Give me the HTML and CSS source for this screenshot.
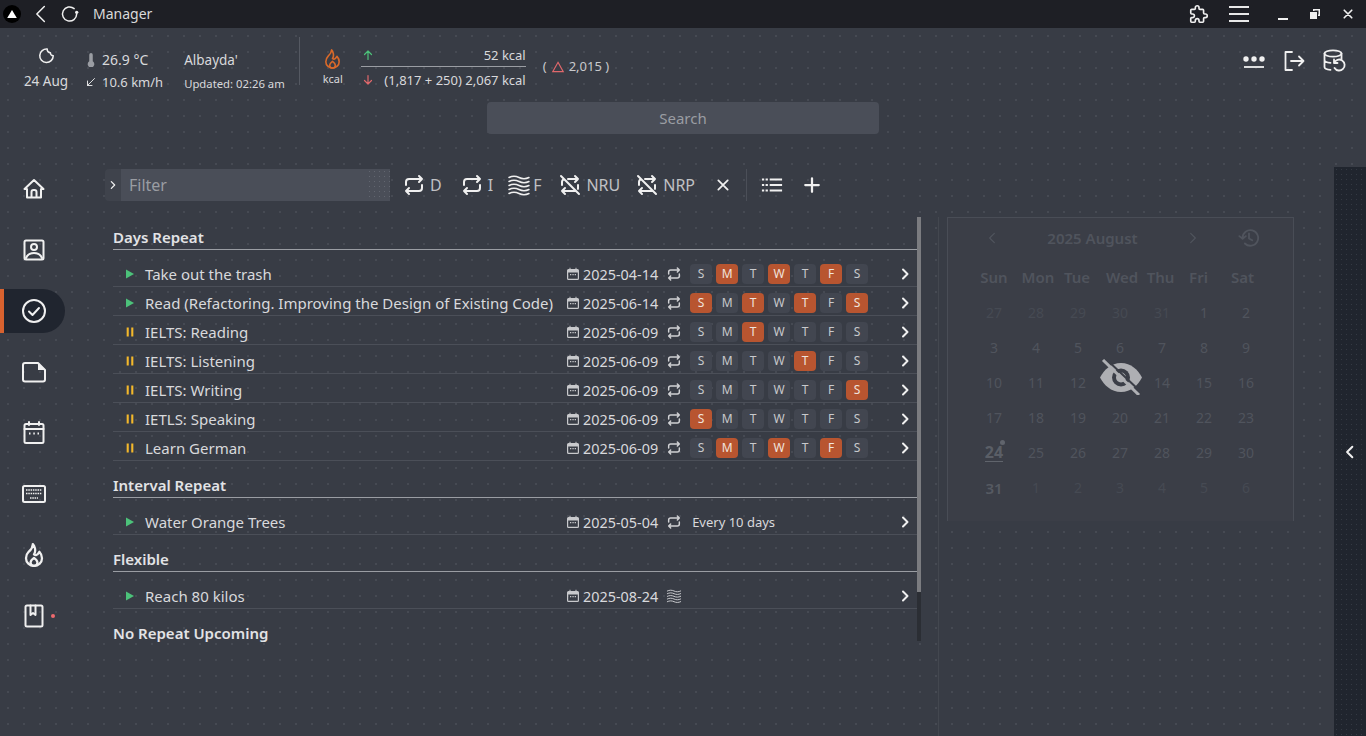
FILE: index.html
```html
<!DOCTYPE html>
<html lang="en">
<head>
    <meta charset="UTF-8">
    <meta name="viewport" content="width=device-width, initial-scale=1.0">
    <title>Manager</title>
    <link rel="stylesheet" href="styles.css">
</head>
<body>

    <!-- shared icons -->
    <svg class="sprite" width="0" height="0">
        <symbol id="i-repeat" viewBox="0 0 24 24"><path d="M4 12V9a3 3 0 0 1 3-3h13m-3-3 3 3-3 3M20 12v3a3 3 0 0 1-3 3H4m3 3-3-3 3-3"/></symbol>
        <symbol id="i-repeat-off" viewBox="0 0 24 24"><path d="M4 12V9c0-1.3.9-2.500 2.100-2.900M10 6h10m-3-3 3 3-3 3M20 12v3c0 .3 0 .6-.1.9m-2 2c-.3.1-.6.1-.9.1H4m3 3-3-3 3-3M3 3l18 18"/></symbol>
        <symbol id="i-waves" viewBox="0 0 24 24"><path d="M2 4.500c3.300-1.600 6.700-1.600 10 0s6.700 1.600 10 0M2 8.500c3.300-1.600 6.700-1.600 10 0s6.700 1.600 10 0M2 12.500c3.300-1.600 6.700-1.600 10 0s6.700 1.600 10 0M2 16.500c3.300-1.600 6.700-1.600 10 0s6.700 1.600 10 0M2 20.500c3.300-1.600 6.700-1.600 10 0s6.700 1.600 10 0"/></symbol>
        <symbol id="i-date" viewBox="0 0 14 14"><path d="M2.500 2h1V.8h1V2h5V.8h1V2h1A1.500 1.500 0 0 1 13 3.500v8a1.500 1.500 0 0 1-1.500 1.500h-9A1.500 1.500 0 0 1 1 11.500v-8A1.500 1.500 0 0 1 2.500 2zM2.200 5.500v6c0 .2.100.3.300.3h9c.2 0 .3-.1.300-.3v-6zM4 7h1.300v1.300H4zm2.400 0h1.300v1.300H6.400zm2.300 0H10v1.300H8.700z"/></symbol>
        <symbol id="i-next" viewBox="0 0 24 24"><path d="M8 3l9 9-9 9"/></symbol>
        <symbol id="i-play" viewBox="0 0 10 10"><path d="M1 .5l8 4.500-8 4.500z"/></symbol>
        <symbol id="i-pause" viewBox="0 0 10 12"><path d="M1 .5h2.500v11H1zm5.500 0H9v11H6.500z"/></symbol>
    </svg>

    <div class="titlebar">
        <div class="title-left">
            <span class="logo"><svg viewBox="0 0 12 10"><path d="M6 0l6 10H0z"/></svg></span>
            <svg class="icon back" viewBox="0 0 24 24"><path d="M16 3l-9 9 9 9"/></svg>
            <svg class="icon reload" viewBox="0 0 24 24"><path d="M20 12a8.500 8.500 0 1 1-3-6.500"/><circle class="solid" cx="20" cy="10" r="2"/></svg>
            <span class="app-name">Manager</span>
        </div>
        <div class="title-right">
            <svg class="icon puzzle" viewBox="0 0 24 24"><path d="M4 7h3a1 1 0 0 0 1-1V5a2 2 0 0 1 4 0v1a1 1 0 0 0 1 1h3a1 1 0 0 1 1 1v3a1 1 0 0 0 1 1h1a2 2 0 0 1 0 4h-1a1 1 0 0 0-1 1v3a1 1 0 0 1-1 1h-3a1 1 0 0 1-1-1v-1a2 2 0 0 0-4 0v1a1 1 0 0 1-1 1H4a1 1 0 0 1-1-1v-3a1 1 0 0 1 1-1h1a2 2 0 0 0 0-4H4a1 1 0 0 1-1-1V8a1 1 0 0 1 1-1"/></svg>
            <span class="burger"><i></i><i></i><i></i></span>
            <span class="win-min"></span>
            <svg class="win-restore" viewBox="0 0 10 10"><path class="solid" d="M3 0h7v7H8V5.500h.5v-4h-4V2H3zM0 3h7v7H0z"/></svg>
            <svg class="icon win-close" viewBox="0 0 24 24"><path d="M3 3l18 18M21 3L3 21"/></svg>
        </div>
    </div>

    <div class="header">
        <div class="weather-date">
            <svg class="icon moon" viewBox="0 0 24 24"><path d="M13 3a9.500 9.500 0 1 0 8.500 9.500 5 5 0 0 1-3-1.500 4 4 0 0 1-1-3 4.500 4.500 0 0 1-4.500-5z"/></svg>
            <span>24 Aug</span>
        </div>
        <div class="weather-stats">
            <div class="stat">
                <svg class="stat-icon" viewBox="0 0 10 16"><path class="dim" d="M3 2a2 2 0 0 1 4 0v7.500a3.800 3.800 0 1 1-4 0z"/></svg>
                <span>26.9 °C</span>
            </div>
            <div class="stat stat-wind">
                <svg class="icon stat-icon" viewBox="0 0 24 24"><path d="M19 5L5 19M5 10v9h9"/></svg>
                <span>10.6 km/h</span>
            </div>
        </div>
        <div class="place">
            <span class="place-name">Albayda'</span>
            <span class="updated">Updated: 02:26 am</span>
        </div>
        <div class="header-sep"></div>
        <div class="kcal-icon">
            <svg class="icon flame" viewBox="4 1 16 21"><path d="M12 10.900c2.300-3.300.2-7.800-1-8.900 0 3.400-2.200 5.300-3.700 6.700C5.900 10.100 5 12.300 5 14.300 5 18 8.100 21 12 21s7-3 7-6.700c0-1.700-1.200-4.400-2.300-5.600-2.100 3.400-3.300 3.400-4.700 2.200z"/><path d="M12 21a3 3 0 0 0 3-3c0-1.800-3-4-3-4s-3 2.200-3 4a3 3 0 0 0 3 3z"/></svg>
            <span>kcal</span>
        </div>
        <div class="kcal-table">
            <div class="kcal-row kcal-in">
                <svg class="kcal-arrow up" viewBox="0 0 24 24"><path d="M12 21V4M5 11l7-7 7 7"/></svg>
                <span>52 kcal</span>
            </div>
            <div class="kcal-row">
                <svg class="kcal-arrow down" viewBox="0 0 24 24"><path d="M12 3v17M5 13l7 7 7-7"/></svg>
                <span>(1,817 + 250) 2,067 kcal</span>
            </div>
        </div>
        <div class="kcal-delta">
            <span>(</span>
            <svg class="delta-icon" viewBox="0 0 24 24"><path d="M12 4l9 16H3z"/></svg>
            <span>2,015 )</span>
        </div>
        <div class="header-actions">
            <svg class="icon action" viewBox="0 0 24 24"><path class="square" d="M2 19h20"/><g class="solid"><circle cx="4" cy="11" r="2.700"/><circle cx="12" cy="11" r="2.700"/><circle cx="20" cy="11" r="2.700"/></g></svg>
            <svg class="icon action" viewBox="0 0 24 24"><path d="M10 4H3.500v18H10M9 13h12.500M17 8.500l4.500 4.500-4.500 4.500"/></svg>
            <svg class="icon action" viewBox="0 0 24 24"><ellipse cx="11" cy="5.500" rx="8.500" ry="3.200"/><path d="M2.500 5.500v13.500c0 1.500 2.500 2.600 6 2.900M19.500 5.500V11M2.500 12c0 1.500 2.500 2.600 6 2.900"/><path d="M12 11.500v3.500h3.500M12 15a5.500 5.500 0 1 1 .5 5"/></svg>
        </div>
    </div>

    <div class="search">Search</div>

    <div class="workspace">
        <nav class="sidebar">
            <a class="nav-item"><svg class="icon" viewBox="0 0 24 24"><path d="M5 12H2.500L12 3l9.500 9H19M5 12v8.500h14V12M9.500 20.500V15a2 2 0 0 1 2-2h1a2 2 0 0 1 2 2v5.500"/></svg></a>
            <a class="nav-item"><svg class="icon" viewBox="0 0 24 24"><rect x="2.500" y="2.500" width="19" height="19" rx="1.500"/><circle cx="12" cy="9" r="3"/><path d="M4 20c1.500-3.500 4.500-5 8-5s6.500 1.500 8 5"/></svg></a>
            <a class="nav-item active"><svg class="icon" viewBox="0 0 24 24"><circle cx="12" cy="12" r="11"/><path d="M7 12.500l3.500 3.500L17 9"/></svg></a>
            <a class="nav-item"><svg class="icon" viewBox="0 0 24 24"><path d="M1 5a2 2 0 0 1 2-2h13l7 7v9.500a2 2 0 0 1-2 2H3a2 2 0 0 1-2-2z"/><path class="solid" d="M16 3l7 7h-7z"/></svg></a>
            <a class="nav-item"><svg class="icon" viewBox="0 0 24 24"><rect x="2.500" y="3" width="19" height="19" rx="1.500"/><path d="M2.500 8h19M7 1v3M17 1v3"/><path class="dots" d="M7 12.500h1.500M11.300 12.500h1.500M15.500 12.500H17"/></svg></a>
            <a class="nav-item"><svg class="icon keys" viewBox="0 0 24 24"><rect x="1" y="4" width="22" height="16" rx="1.500"/><path class="dots" d="M4 8h16M4 11.500h16M8 16h8"/></svg></a>
            <a class="nav-item"><svg class="icon" viewBox="4 1 16 21"><path d="M12 10.900c2.300-3.300.2-7.800-1-8.900 0 3.400-2.200 5.300-3.700 6.700C5.900 10.100 5 12.300 5 14.300 5 18 8.100 21 12 21s7-3 7-6.700c0-1.700-1.200-4.400-2.300-5.600-2.100 3.400-3.300 3.400-4.700 2.200z"/><path d="M12 21a3 3 0 0 0 3-3c0-1.800-3-4-3-4s-3 2.200-3 4a3 3 0 0 0 3 3z"/></svg></a>
            <a class="nav-item"><svg class="icon" viewBox="0 0 24 24"><rect x="3.500" y="1.500" width="17" height="21" rx="1.500"/><path d="M8.500 1.500V11l2.500-2 2.500 2V1.500"/></svg><span class="nav-dot"></span></a>
        </nav>

        <main class="content">
            <div class="toolbar">
                <div class="filter">
                    <span class="filter-toggle"><svg class="icon" viewBox="0 0 24 24"><path d="M8 4l8 8-8 8"/></svg></span>
                    <div class="filter-input"><span>Filter</span><span class="filter-dots"></span></div>
                </div>
                <a class="tool"><svg class="icon"><use href="#i-repeat"/></svg><span>D</span></a>
                <a class="tool"><svg class="icon"><use href="#i-repeat"/></svg><span>I</span></a>
                <a class="tool tool-waves"><svg class="icon thin"><use href="#i-waves"/></svg><span>F</span></a>
                <a class="tool tool-off"><svg class="icon"><use href="#i-repeat-off"/></svg><span>NRU</span></a>
                <a class="tool tool-nrp"><svg class="icon"><use href="#i-repeat-off"/></svg><span>NRP</span></a>
                <a class="tool tool-x"><svg class="icon heavy" viewBox="0 0 24 24"><path d="M4 4l16 16M20 4L4 20"/></svg></a>
                <span class="tool-sep"></span>
                <a class="tool tool-list"><svg class="icon" viewBox="0 0 24 24"><path class="dots" d="M1 6h2.500M5 6h2.500M1 12h2.500M5 12h2.500M1 18h2.500M5 18h2.500M9.500 6H23M9.500 12H23M9.500 18H23"/></svg></a>
                <a class="tool tool-add"><svg class="icon heavy" viewBox="0 0 24 24"><path d="M12 3v18M3 12h18"/></svg></a>
            </div>

            <div class="panes">
                <section class="tasks">
                    <div class="task-list">
                        <h4 class="group">Days Repeat</h4>

                        <div class="task">
                            <svg class="status play"><use href="#i-play"/></svg>
                            <span class="task-name">Take out the trash</span>
                            <svg class="date-icon"><use href="#i-date"/></svg><span class="date">2025-04-14</span>
                            <svg class="icon kind"><use href="#i-repeat"/></svg>
                            <div class="days"><span>S</span><span class="on">M</span><span>T</span><span class="on">W</span><span>T</span><span class="on">F</span><span>S</span></div>
                            <svg class="icon next"><use href="#i-next"/></svg>
                        </div>
                        <div class="task">
                            <svg class="status play"><use href="#i-play"/></svg>
                            <span class="task-name">Read (Refactoring. Improving the Design of Existing Code)</span>
                            <svg class="date-icon"><use href="#i-date"/></svg><span class="date">2025-06-14</span>
                            <svg class="icon kind"><use href="#i-repeat"/></svg>
                            <div class="days"><span class="on">S</span><span>M</span><span class="on">T</span><span>W</span><span class="on">T</span><span>F</span><span class="on">S</span></div>
                            <svg class="icon next"><use href="#i-next"/></svg>
                        </div>
                        <div class="task">
                            <svg class="status pause"><use href="#i-pause"/></svg>
                            <span class="task-name">IELTS: Reading</span>
                            <svg class="date-icon"><use href="#i-date"/></svg><span class="date">2025-06-09</span>
                            <svg class="icon kind"><use href="#i-repeat"/></svg>
                            <div class="days"><span>S</span><span>M</span><span class="on">T</span><span>W</span><span>T</span><span>F</span><span>S</span></div>
                            <svg class="icon next"><use href="#i-next"/></svg>
                        </div>
                        <div class="task">
                            <svg class="status pause"><use href="#i-pause"/></svg>
                            <span class="task-name">IELTS: Listening</span>
                            <svg class="date-icon"><use href="#i-date"/></svg><span class="date">2025-06-09</span>
                            <svg class="icon kind"><use href="#i-repeat"/></svg>
                            <div class="days"><span>S</span><span>M</span><span>T</span><span>W</span><span class="on">T</span><span>F</span><span>S</span></div>
                            <svg class="icon next"><use href="#i-next"/></svg>
                        </div>
                        <div class="task">
                            <svg class="status pause"><use href="#i-pause"/></svg>
                            <span class="task-name">IELTS: Writing</span>
                            <svg class="date-icon"><use href="#i-date"/></svg><span class="date">2025-06-09</span>
                            <svg class="icon kind"><use href="#i-repeat"/></svg>
                            <div class="days"><span>S</span><span>M</span><span>T</span><span>W</span><span>T</span><span>F</span><span class="on">S</span></div>
                            <svg class="icon next"><use href="#i-next"/></svg>
                        </div>
                        <div class="task">
                            <svg class="status pause"><use href="#i-pause"/></svg>
                            <span class="task-name">IETLS: Speaking</span>
                            <svg class="date-icon"><use href="#i-date"/></svg><span class="date">2025-06-09</span>
                            <svg class="icon kind"><use href="#i-repeat"/></svg>
                            <div class="days"><span class="on">S</span><span>M</span><span>T</span><span>W</span><span>T</span><span>F</span><span>S</span></div>
                            <svg class="icon next"><use href="#i-next"/></svg>
                        </div>
                        <div class="task">
                            <svg class="status pause"><use href="#i-pause"/></svg>
                            <span class="task-name">Learn German</span>
                            <svg class="date-icon"><use href="#i-date"/></svg><span class="date">2025-06-09</span>
                            <svg class="icon kind"><use href="#i-repeat"/></svg>
                            <div class="days"><span>S</span><span class="on">M</span><span>T</span><span class="on">W</span><span>T</span><span class="on">F</span><span>S</span></div>
                            <svg class="icon next"><use href="#i-next"/></svg>
                        </div>

                        <h4 class="group">Interval Repeat</h4>
                        <div class="task">
                            <svg class="status play"><use href="#i-play"/></svg>
                            <span class="task-name">Water Orange Trees</span>
                            <svg class="date-icon"><use href="#i-date"/></svg><span class="date">2025-05-04</span>
                            <svg class="icon kind"><use href="#i-repeat"/></svg>
                            <span class="every">Every 10 days</span>
                            <svg class="icon next"><use href="#i-next"/></svg>
                        </div>

                        <h4 class="group">Flexible</h4>
                        <div class="task">
                            <svg class="status play"><use href="#i-play"/></svg>
                            <span class="task-name">Reach 80 kilos</span>
                            <svg class="date-icon"><use href="#i-date"/></svg><span class="date">2025-08-24</span>
                            <svg class="icon kind thin"><use href="#i-waves"/></svg>
                            <svg class="icon next"><use href="#i-next"/></svg>
                        </div>

                        <h4 class="group last">No Repeat Upcoming</h4>
                    </div>
                    <div class="scrollbar"><div class="scroll-thumb"></div></div>
                </section>

                <aside class="side">
                    <div class="calendar">
                        <div class="cal-head">
                            <svg class="icon cal-prev" viewBox="0 0 24 24"><path d="M16 4l-8 8 8 8"/></svg>
                            <span class="cal-title">2025 August</span>
                            <svg class="icon cal-next" viewBox="0 0 24 24"><path d="M8 4l8 8-8 8"/></svg>
                            <svg class="icon cal-history" viewBox="0 0 24 24"><path d="M5 12a8.500 8.500 0 1 1 2.500 6M1.500 10L5 13l3.500-3M12 7v5.500l3.500 2"/></svg>
                        </div>
                        <div class="cal-week">
                            <b>Sun</b><b>Mon</b><b>Tue</b><b>Wed</b><b>Thu</b><b>Fri</b><b>Sat</b>
                        </div>
                        <div class="cal-grid">
                            <span class="out">27</span><span class="out">28</span><span class="out">29</span><span class="out">30</span><span class="out">31</span><span>1</span><span>2</span>
                            <span>3</span><span>4</span><span>5</span><span>6</span><span>7</span><span>8</span><span>9</span>
                            <span>10</span><span>11</span><span>12</span><span>13</span><span>14</span><span>15</span><span>16</span>
                            <span>17</span><span>18</span><span>19</span><span>20</span><span>21</span><span>22</span><span>23</span>
                            <span class="today">24</span><span>25</span><span>26</span><span>27</span><span>28</span><span>29</span><span>30</span>
                            <span class="last-day">31</span><span class="out">1</span><span class="out">2</span><span class="out">3</span><span class="out">4</span><span class="out">5</span><span class="out">6</span>
                        </div>
                        <svg class="eye-off" viewBox="0 0 42 36"><path d="M21 4c10 0 17 7 21 14.500-4 7.500-11 14.500-21 14.500S4 26 0 18.500C4 11 11 4 21 4z"/><circle class="eye-hole" cx="21" cy="18.500" r="9"/><circle cx="21" cy="18.500" r="5"/><path class="eye-slash-gap" d="M6 0l36 34"/><path class="eye-slash" d="M3 1l36 35"/></svg>
                    </div>
                </aside>
            </div>
        </main>

        <div class="drawer">
            <svg class="icon" viewBox="0 0 24 24"><path d="M16 3l-9 9 9 9"/></svg>
        </div>
    </div>

</body>
</html>
```

FILE: styles.css
```css
* {
    box-sizing: border-box;
}

body {
    margin: 0;
    width: 1366px;
    height: 736px;
    overflow: hidden;
    font-family: "Noto Sans", sans-serif;
    font-size: 14px;
    color: #d8d9dc;
    display: flex;
    flex-direction: column;
    /* dotted background starts under the title bar */
    background-color: #383c45;
    background-image: radial-gradient(circle at 8px 8px, #464a53 1px, transparent 1.2px);
    background-size: 16px 16px;
    background-position: 0 28px;
}

.sprite {
    position: absolute;
}

.icon {
    display: block;
    fill: none;
    stroke: #f0f0f0;
    stroke-width: 1.8;
    stroke-linecap: round;
    stroke-linejoin: round;
}

.solid {
    fill: #f0f0f0;
    stroke: none;
}

.thin {
    stroke-width: 1.4;
}

.heavy {
    stroke-width: 3;
}

.square {
    stroke-linecap: butt;
}

/* Title bar */
.titlebar {
    height: 28px;
    flex: none;
    background: #1e1f25;
    display: flex;
    justify-content: space-between;
    align-items: center;
}

.title-left,
.title-right {
    display: flex;
    align-items: center;
}

.logo {
    width: 18px;
    height: 18px;
    margin-left: 3px;
    border-radius: 50%;
    background: #000;
    display: flex;
    justify-content: center;
    align-items: center;
}

.logo svg {
    width: 10px;
    height: 8px;
    fill: #fff;
}

.back {
    width: 20px;
    height: 20px;
    margin-left: 10px;
}

.reload {
    width: 20px;
    height: 20px;
    margin-left: 9px;
}

.app-name {
    margin-left: 13px;
    margin-bottom: 2px;
    font-size: 14px;
    color: #d9d9d9;
}

.puzzle {
    width: 22px;
    height: 22px;
}

.burger {
    width: 20px;
    margin-left: 19px;
    display: flex;
    flex-direction: column;
    gap: 5px;
}

.burger i {
    height: 2px;
    background: #e8e8e8;
}

.win-min {
    width: 10px;
    height: 2px;
    margin-left: 29px;
    margin-top: 9px;
    background: #f0f0f0;
}

.win-restore {
    width: 10px;
    height: 10px;
    margin-left: 22px;
}

.win-close {
    width: 10px;
    height: 10px;
    margin-left: 23px;
    margin-right: 13px;
    stroke-width: 4;
}

/* Header */
.header {
    height: 74px;
    flex: none;
    display: flex;
    align-items: flex-start;
}

.weather-date {
    width: 44px;
    margin-left: 24px;
    margin-top: 19px;
    display: flex;
    flex-direction: column;
    align-items: center;
    white-space: nowrap;
    font-size: 13.5px;
    line-height: 19px;
}

.moon {
    width: 17px;
    height: 17px;
    margin-bottom: 8px;
    stroke-width: 2.2;
}

.weather-stats {
    margin-left: 17px;
    margin-top: 22px;
    display: flex;
    flex-direction: column;
    gap: 3px;
}

.stat {
    display: flex;
    align-items: center;
    height: 19px;
    white-space: nowrap;
    gap: 5px;
}

.stat-wind {
    font-size: 13px;
}

.stat-icon {
    width: 12px;
    height: 12px;
}

.stat:first-child .stat-icon {
    height: 14px;
}

.dim {
    fill: #9a9da3;
}

.place {
    margin-left: 21px;
    margin-top: 23px;
    display: flex;
    flex-direction: column;
    white-space: nowrap;
}

.place-name {
    line-height: 19px;
    font-size: 13.5px;
}

.updated {
    margin-top: 6px;
    font-size: 11.3px;
    line-height: 16px;
}

.header-sep {
    width: 1px;
    height: 48px;
    margin-top: 9px;
    margin-left: 14px;
    background: #555962;
}

.kcal-icon {
    width: 26px;
    margin-left: 20px;
    margin-top: 21px;
    display: flex;
    flex-direction: column;
    align-items: center;
    font-size: 11px;
    line-height: 14px;
}

.flame {
    width: 17px;
    height: 20px;
    margin-bottom: 3px;
    stroke: #d8692a;
    stroke-width: 1.7;
}

.kcal-table {
    width: 165px;
    margin-left: 15px;
    margin-top: 15px;
}

.kcal-row {
    height: 25px;
    display: flex;
    justify-content: space-between;
    align-items: center;
    font-size: 13px;
    padding-left: 1px;
}

.kcal-in {
    height: 24px;
    border-bottom: 1px solid #9a9da3;
    margin-bottom: 0;
}

.kcal-arrow {
    width: 12px;
    height: 12px;
    fill: none;
    stroke-width: 2.4;
    stroke-linecap: round;
    stroke-linejoin: round;
}

.up {
    stroke: #4cc27a;
}

.down {
    stroke: #e0686c;
}

.kcal-delta {
    margin-left: 17px;
    margin-top: 29px;
    display: flex;
    align-items: center;
    gap: 4px;
    font-size: 13px;
    line-height: 19px;
    color: #c8c9cc;
}

.delta-icon {
    width: 14px;
    height: 14px;
    fill: none;
    stroke: #e0686c;
    stroke-width: 2;
}

.header-actions {
    margin-left: auto;
    margin-right: 20px;
    margin-top: 20px;
    display: flex;
    gap: 16px;
}

.action {
    width: 24px;
    height: 24px;
}

/* Search box */
.search {
    width: 392px;
    height: 32px;
    flex: none;
    margin-left: 487px;
    margin-bottom: 33px;
    border-radius: 4px;
    background: #4a4e58;
    color: #9a9da3;
    font-size: 15px;
    line-height: 32px;
    text-align: center;
}

/* Body of the page */
.workspace {
    height: 569px;
    flex: none;
    display: flex;
}

.sidebar {
    width: 105px;
    flex: none;
    display: flex;
    flex-direction: column;
    gap: 17px;
}

.nav-item {
    width: 65px;
    height: 44px;
    padding-left: 22px;
    display: flex;
    align-items: center;
    position: relative;
}

.nav-item .icon {
    width: 24px;
    height: 24px;
    stroke-width: 2;
}

.nav-item.active {
    background: #20252f;
    border-left: 4px solid #d8622f;
    padding-left: 18px;
    border-radius: 0 22px 22px 0;
}

.nav-dot {
    position: absolute;
    left: 51px;
    top: 20px;
    width: 4px;
    height: 4px;
    border-radius: 50%;
    background: #ef6a6e;
}

.dots {
    stroke-linecap: butt;
}

.keys .dots {
    stroke-width: 1.6;
    stroke-dasharray: 1.5 .8;
}

.content {
    flex: 1;
    min-width: 0;
}

/* Toolbar */
.toolbar {
    height: 32px;
    margin-top: 2px;
    display: flex;
    align-items: center;
    gap: 16px;
}

.filter {
    width: 285px;
    height: 32px;
    margin-right: -6px;
    flex: none;
    display: flex;
}

.filter-toggle {
    width: 16px;
    display: flex;
    justify-content: center;
    align-items: center;
    background: #3f434c;
    border-radius: 4px 0 0 4px;
}

.filter-toggle .icon {
    width: 10px;
    height: 10px;
    stroke-width: 3;
}

.filter-input {
    flex: 1;
    padding-left: 8px;
    display: flex;
    justify-content: space-between;
    align-items: center;
    background: #4a4e58;
    color: #9a9da3;
    font-size: 16px;
}

.filter-dots {
    width: 23px;
    height: 32px;
    background-image: radial-gradient(circle at 2.5px 2.5px, #626670 .7px, transparent .9px);
    background-size: 5px 5px;
}

.tool {
    display: flex;
    align-items: center;
    gap: 4px;
    color: #c0c1c4;
    font-size: 16px;
}

.tool .icon {
    width: 24px;
    height: 24px;
    margin-left: 2px;
    stroke-width: 2;
}

.tool .thin {
    stroke-width: 1.5;
}

.tool-waves {
    margin-left: -6px;
}

.tool-waves .icon {
    margin: 0 -2px 0 4px;
}

.tool-off {
    margin-left: -1px;
}

.tool-nrp {
    margin-left: -3px;
}

.tool-x {
    margin-left: 5px;
}

.tool .heavy {
    stroke-width: 3;
    margin-left: 0;
}

.tool-x .icon {
    width: 14px;
    height: 14px;
}

.tool-sep {
    width: 1px;
    height: 32px;
    background: #4b4f58;
}

.tool-list .icon {
    width: 22px;
    height: 22px;
    margin-left: 0;
}

.tool-list {
    margin-left: -2px;
}

.tool-add .icon {
    width: 18px;
    height: 18px;
}

.tool-add {
    margin-left: 4px;
}

/* Task list and calendar */
.panes {
    height: 519px;
    margin-top: 16px;
    display: flex;
}

.tasks {
    width: 833px;
    height: 424px;
    padding-left: 8px;
    flex: none;
    display: flex;
}

.task-list {
    width: 804px;
    flex: none;
}

.group {
    height: 24px;
    margin: 13px 0 8px;
    border-bottom: 1px solid #9a9da3;
    font-size: 15px;
    font-weight: 600;
    line-height: 22px;
    color: #e2e3e5;
}

.group:first-child {
    margin-top: 9px;
}

.group.last {
    border-bottom: none;
    margin-bottom: 0;
}

.task {
    height: 29px;
    padding-top: 4px;
    display: flex;
    align-items: center;
    border-bottom: 1px solid #4b4f58;
}

.status {
    width: 34px;
    height: 10px;
    margin-right: -2px;
    flex: none;
}

.play {
    fill: #4cc27a;
}

.pause {
    fill: #f3b82b;
}

.task-name {
    width: 421px;
    flex: none;
    font-size: 15px;
    white-space: nowrap;
    color: #d8d9dc;
}

.date-icon {
    width: 14px;
    height: 14px;
    flex: none;
    fill: #c8c9cc;
}

.date {
    margin-left: 3px;
    font-size: 14.4px;
    color: #d8d9dc;
}

.kind {
    width: 16px;
    height: 16px;
    margin-left: 8px;
    flex: none;
    stroke-width: 2.2;
    stroke: #d0d1d4;
}

.kind.thin {
    stroke-width: 1.4;
}

.days {
    margin-left: 8px;
    display: flex;
    gap: 4px;
}

.days span {
    width: 22px;
    height: 20px;
    border-radius: 4px;
    background: #424650;
    font-size: 12px;
    line-height: 20px;
    text-align: center;
    color: #c8c9cc;
}

.days .on {
    background: #b85530;
    color: #f0e4de;
}

.every {
    margin-left: 10px;
    font-size: 13px;
}

.next {
    width: 12px;
    height: 12px;
    margin-left: auto;
    margin-right: 6px;
    flex: none;
    stroke-width: 4;
}

.scrollbar {
    width: 4px;
    height: 100%;
    flex: none;
    background: #2b2e34;
}

.scroll-thumb {
    height: 375px;
    background: #7b7c80;
}

.side {
    flex: 1;
    border-left: 1px solid #43474f;
    padding-left: 8px;
}

.calendar {
    width: 347px;
    height: 304px;
    border: 1px solid #494d56;
    border-bottom: none;
    background: #3b3e47;
    position: relative;
    color: #50545d;
}

.cal-head {
    height: 40px;
    display: flex;
    align-items: center;
}

.cal-head .icon {
    stroke: #50545d;
    stroke-width: 2;
}

.cal-prev,
.cal-next {
    width: 14px;
    height: 14px;
}

.cal-prev {
    margin-left: 37px;
}

.cal-title {
    width: 187px;
    font-size: 15px;
    font-weight: 600;
    text-align: center;
}

.cal-history {
    width: 22px;
    height: 22px;
    margin-left: 38px;
}

/* week day names are not evenly spaced in the app, columns keep their centres */
.cal-week {
    height: 37px;
    margin-left: 25px;
    display: grid;
    grid-template-columns: 42px 46px 32px 58px 19px 57px 31px;
    justify-items: center;
    align-items: center;
    font-size: 15px;
}

.cal-week b {
    font-weight: 600;
}

.cal-grid {
    margin-left: 25px;
    display: grid;
    grid-template-columns: repeat(7, 42px);
    grid-auto-rows: 35px;
    justify-items: center;
    align-items: center;
    font-size: 14px;
}

.cal-grid .out {
    color: #464a53;
}

.today {
    font-size: 16px;
    font-weight: 700;
    border-bottom: 1px solid #60646c;
    line-height: 18px;
    position: relative;
    color: #5a5e66;
}

.today::after {
    content: "";
    position: absolute;
    top: -3px;
    right: -2px;
    width: 5px;
    height: 5px;
    border-radius: 50%;
    background: #60646c;
}

.last-day {
    font-size: 15px;
    font-weight: 600;
    color: #565a62;
}

.eye-off {
    position: absolute;
    left: 152px;
    top: 141px;
    width: 42px;
    height: 36px;
    fill: #aeafb3;
}

.eye-hole {
    fill: #3b3e47;
}

.eye-slash-gap {
    stroke: #3b3e47;
    stroke-width: 2;
}

.eye-slash {
    stroke: #aeafb3;
    stroke-width: 3;
}

/* Collapsed panel on the right */
.drawer {
    width: 32px;
    flex: none;
    display: flex;
    justify-content: center;
    align-items: center;
    background-color: #20252e;
    background-image: radial-gradient(circle at 2.5px 2.5px, #343943 .8px, transparent 1px);
    background-size: 5px 5px;
}

.drawer .icon {
    width: 14px;
    height: 14px;
    stroke-width: 3.4;
}
```
